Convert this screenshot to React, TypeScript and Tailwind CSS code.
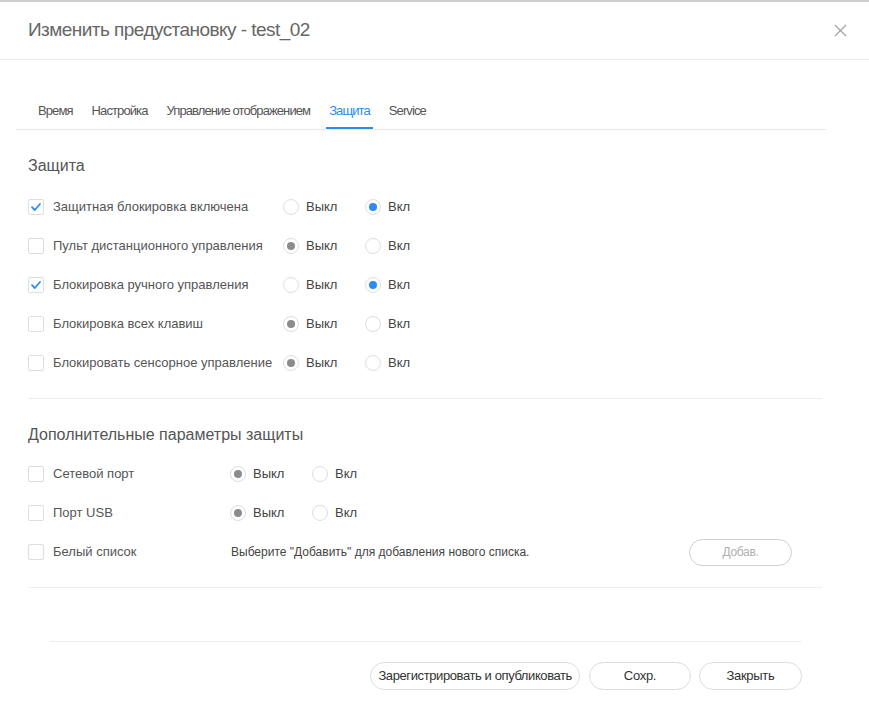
import React from "react";

const font = { fontFamily: '"Liberation Sans", Arial, sans-serif' };

function Checkbox({ checked }: { checked?: boolean }) {
	return (
		<span className="flex h-[16px] w-[16px] shrink-0 items-center justify-center rounded-[2px] border border-[#dcdee2] bg-white">
			{checked && (
				<svg width="12" height="12" viewBox="0 0 12 12" fill="none">
					<path d="M2 6.2 L4.8 9 L10 3" stroke="#2d8cf0" strokeWidth="1.8" strokeLinecap="round" strokeLinejoin="round" />
				</svg>
			)}
		</span>
	);
}

function Radio({ on, color }: { on?: boolean; color?: "blue" | "gray" }) {
	return (
		<span className="flex h-[16px] w-[16px] shrink-0 items-center justify-center rounded-full border border-[#dcdee2] bg-white">
			{on && (
				<span
					className={
						"h-[8px] w-[8px] rounded-full " + (color === "blue" ? "bg-[#2d8cf0]" : "bg-[#8c8c8c]")
					}
				></span>
			)}
		</span>
	);
}

function Switch({ value }: { value: "on" | "off" }) {
	const blue = value === "on";
	return (
		<div className="flex items-center">
			<div className="flex w-[82px] items-center gap-[7px]">
				<Radio on={!blue} color="gray" />
				<span className="text-[13px] text-[#444]">Выкл</span>
			</div>
			<div className="flex items-center gap-[7px]">
				<Radio on={blue} color="blue" />
				<span className="text-[13px] text-[#444]">Вкл</span>
			</div>
		</div>
	);
}

const mainRows: { label: string; checked: boolean; value: "on" | "off" }[] = [
	{ label: "Защитная блокировка включена", checked: true, value: "on" },
	{ label: "Пульт дистанционного управления", checked: false, value: "off" },
	{ label: "Блокировка ручного управления", checked: true, value: "on" },
	{ label: "Блокировка всех клавиш", checked: false, value: "off" },
	{ label: "Блокировать сенсорное управление", checked: false, value: "off" },
];

const tabs = ["Время", "Настройка", "Управление отображением", "Защита", "Service"];

export default function App() {
	return (
		<div style={font} className="h-[710px] w-[869px] border-t-2 border-[#cfcfcf] bg-white">
			<div className="flex h-[58px] items-center justify-between border-b border-[#e8e8e8] pl-[28px] pr-[22px]">
				<span className="text-[19px] tracking-[-0.55px] text-[#666]">Изменить предустановку - test_02</span>
				<svg width="13" height="13" viewBox="0 0 13 13">
					<path d="M1 1 L12 12 M12 1 L1 12" stroke="#a0a0a0" strokeWidth="1.1" />
				</svg>
			</div>

			<div className="ml-[16px] mr-[43px] mt-[41px] flex border-b border-[#e8e8e8] pl-[19px]">
				{tabs.map((tab) => (
					<div
						key={tab}
						className={
							"mr-[13px] px-[3px] pb-[6px] text-[13px] tracking-[-0.9px] " +
							(tab === "Защита" ? "border-b-2 border-[#2d8cf0] text-[#2d8cf0]" : "border-b-2 border-transparent text-[#555]")
						}
					>
						{tab}
					</div>
				))}
			</div>

			<div className="px-[28px]">
				<div className="pt-[24px] text-[16px] text-[#555]">Защита</div>
				<div className="mt-[10px] flex flex-col">
					{mainRows.map((row) => (
						<div key={row.label} className="flex h-[39px] items-center">
							<div className="flex w-[255px] items-center gap-[9px]">
								<Checkbox checked={row.checked} />
								<span className="whitespace-nowrap text-[13px] text-[#555]">{row.label}</span>
							</div>
							<Switch value={row.value} />
						</div>
					))}
				</div>
				<div className="mr-[19px] mt-[15px] border-b border-[#eeeeee]"></div>

				<div className="pt-[24px] text-[16px] text-[#555]">Дополнительные параметры защиты</div>
				<div className="mt-[8px] flex flex-col">
					<div className="flex h-[39px] items-center">
						<div className="flex w-[202px] items-center gap-[9px]">
							<Checkbox />
							<span className="text-[13px] text-[#555]">Сетевой порт</span>
						</div>
						<Switch value="off" />
					</div>
					<div className="flex h-[39px] items-center">
						<div className="flex w-[202px] items-center gap-[9px]">
							<Checkbox />
							<span className="text-[13px] text-[#555]">Порт USB</span>
						</div>
						<Switch value="off" />
					</div>
					<div className="flex h-[39px] items-center">
						<div className="flex w-[203px] items-center gap-[9px]">
							<Checkbox />
							<span className="text-[13px] text-[#555]">Белый список</span>
						</div>
						<span className="text-[12px] text-[#444]">
							Выберите "Добавить" для добавления нового списка.
						</span>
						<button className="ml-auto mr-[49px] h-[27px] w-[103px] rounded-full border border-[#cfcfcf] text-[12px] tracking-[-0.3px] text-[#b0b0b0]">
							Добав.
						</button>
					</div>
				</div>
				<div className="mr-[19px] mt-[15px] border-b border-[#eeeeee]"></div>
			</div>

			<div className="ml-[50px] mr-[67px] mt-[53px] border-t border-[#eeeeee]"></div>
			<div className="mr-[67px] mt-[20px] flex justify-end gap-[8px]">
				<button className="mr-[1px] h-[28px] rounded-full border border-[#dcdee6] px-[7px] text-[13px] tracking-[-0.4px] text-[#333]">
					Зарегистрировать и опубликовать
				</button>
				<button className="h-[28px] w-[102px] rounded-full border border-[#dcdee6] text-[13px] tracking-[-0.3px] text-[#333]">
					Сохр.
				</button>
				<button className="h-[28px] w-[103px] rounded-full border border-[#dcdee6] text-[13px] tracking-[-0.3px] text-[#333]">
					Закрыть
				</button>
			</div>
		</div>
	);
}
